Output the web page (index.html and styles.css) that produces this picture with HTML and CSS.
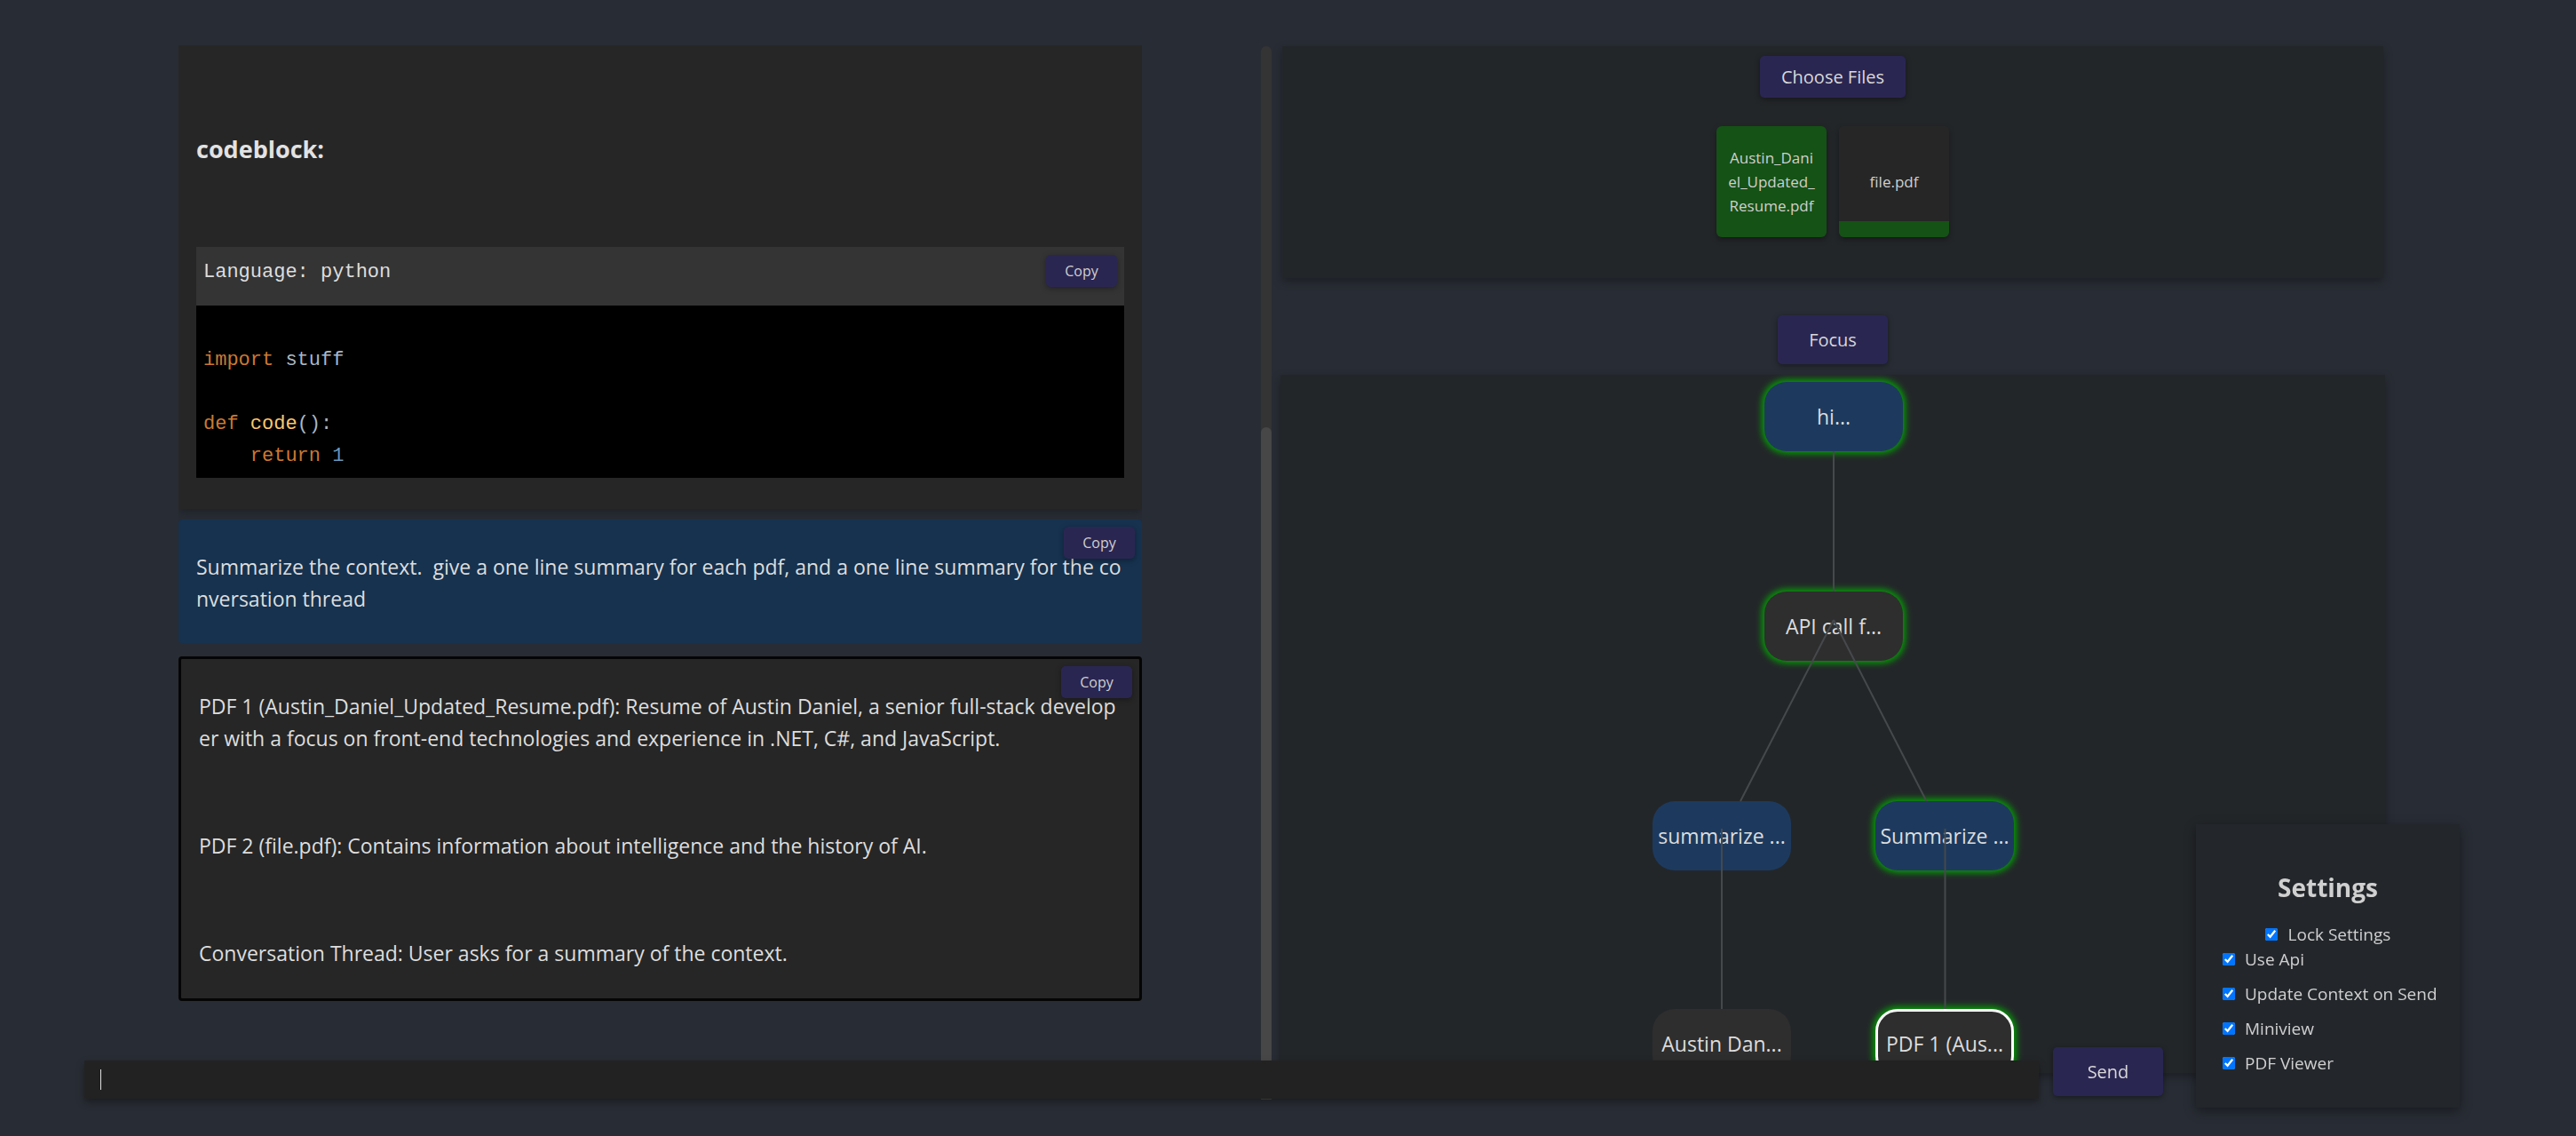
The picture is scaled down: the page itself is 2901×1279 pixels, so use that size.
FILE: index.html
```html
<!DOCTYPE html>
<html lang="en">
<head>
<meta charset="utf-8">
<title>Chat</title>
<link rel="stylesheet" href="styles.css">
</head>
<body>
<div class="app">
  <main class="chat">
    <section class="card">
      <h3 class="heading">codeblock:</h3>
      <div class="code">
        <div class="code-head">
          <span class="lang">Language: python</span>
          <button class="copy">Copy</button>
        </div>
        <div class="code-body">
          <div class="ln"><span class="kw">import</span> stuff</div>
          <div class="ln"></div>
          <div class="ln"><span class="kw">def</span> <span class="fn">code</span>():</div>
          <div class="ln">    <span class="kw">return</span> <span class="num">1</span></div>
        </div>
      </div>
    </section>
    <section class="msg user">
      <button class="copy copy-float">Copy</button>
      <p>Summarize the context.  give a one line summary for each pdf, and a one line summary for the conversation thread</p>
    </section>
    <section class="msg reply">
      <button class="copy copy-float">Copy</button>
      <p>PDF 1 (Austin_Daniel_Updated_Resume.pdf): Resume of Austin Daniel, a senior full-stack developer with a focus on front-end technologies and experience in .NET, C#, and JavaScript.</p>
      <p>PDF 2 (file.pdf): Contains information about intelligence and the history of AI.</p>
      <p>Conversation Thread: User asks for a summary of the context.</p>
    </section>
  </main>

  <div class="scrollbar"><div class="thumb"></div></div>

  <aside class="right">
    <div class="files-card">
      <button class="btn choose">Choose Files</button>
      <div class="files">
        <div class="file done">Austin_Daniel_Updated_Resume.pdf</div>
        <div class="file partial">file.pdf</div>
      </div>
    </div>
    <button class="btn focus">Focus</button>
    <div class="graph">
      <div class="node blue glow n-hi">hi...</div>
      <div class="node dark glow n-api">API call f...</div>
      <div class="node blue n-sl">summarize ...</div>
      <div class="node blue glow n-sr">Summarize ...</div>
      <div class="node dark n-al">Austin Dan...</div>
      <div class="node dark glow selected n-pr">PDF 1 (Aus...</div>
      <svg class="edges" width="1244" height="786" viewBox="0 0 1244 786">
        <line x1="623" y1="86" x2="623" y2="244"/>
        <line x1="623" y1="276" x2="518" y2="480"/>
        <line x1="623" y1="276" x2="727.5" y2="480"/>
        <line x1="497" y1="511" x2="497" y2="714"/>
        <line x1="748.5" y1="511" x2="748.5" y2="714"/>
      </svg>
    </div>
  </aside>
</div>

<div class="composer">
  <div class="input"><span class="caret"></span></div>
  <button class="btn send">Send</button>
</div>

<div class="settings">
  <h2 class="settings-title">Settings</h2>
  <label class="opt lock"><input type="checkbox" checked><span>Lock Settings</span></label>
  <label class="opt"><input type="checkbox" checked><span>Use Api</span></label>
  <label class="opt"><input type="checkbox" checked><span>Update Context on Send</span></label>
  <label class="opt"><input type="checkbox" checked><span>Miniview</span></label>
  <label class="opt"><input type="checkbox" checked><span>PDF Viewer</span></label>
</div>
</body>
</html>
```

FILE: styles.css
```css
* { box-sizing: border-box; }

html, body {
  margin: 0;
  height: 100%;
}

body {
  background: #282c34;
  color: #dddddd;
  font-family: "Open Sans", "Noto Sans", sans-serif;
  overflow: hidden;
}

.app {
  display: flex;
  align-items: flex-start;
  height: 100vh;
  padding-top: 51px;
}

/* ---------- chat column ---------- */
.chat {
  flex: none;
  width: 1085px;
  height: 1142px;
  margin-left: 201px;
  overflow: hidden;
  display: flex;
  flex-direction: column;
}

.card {
  flex: none;
  background: #262626;
  padding: 0 20px 35px;
  box-shadow: 0 4px 10px rgba(0, 0, 0, 0.25);
}

.heading {
  margin: 99px 0 92px;
  font-size: 27px;
  line-height: 36px;
  font-weight: 700;
  color: #e2e2e2;
}

.code-head {
  height: 66px;
  background: #343434;
  display: flex;
  justify-content: space-between;
  align-items: flex-start;
  padding: 9px 8px 0;
}

.lang {
  margin-top: 2px;
  font-family: "Liberation Mono", "DejaVu Sans Mono", monospace;
  font-size: 22px;
  line-height: 36px;
  color: #dddddd;
}

.code-body {
  background: #000000;
  padding: 44px 8px 6px;
  font-family: "Liberation Mono", "DejaVu Sans Mono", monospace;
  font-size: 22px;
  line-height: 36px;
  color: #a9b7c6;
}

.ln {
  height: 36px;
  white-space: pre;
}

.kw { color: #cc7832; }
.fn { color: #ffc66d; }
.num { color: #6897bb; }

.copy {
  width: 80px;
  height: 36px;
  padding: 0;
  border: 0;
  border-radius: 5px;
  background: #2a2652;
  color: #cfcfcf;
  font-family: inherit;
  font-size: 16px;
  box-shadow: 0 2px 6px rgba(0, 0, 0, 0.35);
}

.msg {
  flex: none;
  position: relative;
  font-size: 23px;
  line-height: 36px;
  border-radius: 4px;
}

.msg p {
  margin: 0;
  white-space: pre-wrap;
  word-break: break-all;
}

.user {
  margin-top: 12px;
  background: #16324f;
  padding: 35px 20px 32px;
}

.reply {
  margin-top: 15px;
  background: #262626;
  border: 3px solid #050505;
  padding: 35px 20px 33px;
}

.reply p + p { margin-top: 85px; }

.copy-float {
  position: absolute;
  top: 8px;
  right: 8px;
}

/* ---------- scrollbar ---------- */
.scrollbar {
  flex: none;
  width: 12px;
  height: 1186px;
  margin: 1px 0 0 134px;
  background: #343434;
  border-radius: 6px 6px 0 0;
  display: flex;
  flex-direction: column;
}

.thumb {
  margin-top: 429px;
  flex: 1;
  background: #474747;
  border-radius: 6px 6px 0 0;
}

/* ---------- right column ---------- */
.right {
  flex: none;
  width: 1244px;
  margin-left: 10px;
  display: flex;
  flex-direction: column;
  align-items: center;
}

.btn {
  border: 0;
  border-radius: 5px;
  background: #2a2652;
  color: #d8d8d8;
  font-family: inherit;
  font-size: 20px;
  padding: 0;
  box-shadow: 0 2px 6px rgba(0, 0, 0, 0.4);
}

.files-card {
  align-self: stretch;
  margin: 1px 2px 0;
  height: 261px;
  padding-top: 11px;
  background: #232629;
  box-shadow: 0 4px 10px rgba(0, 0, 0, 0.3);
  display: flex;
  flex-direction: column;
  align-items: center;
}

.choose {
  width: 164px;
  height: 47px;
}

.files {
  margin-top: 32px;
  display: flex;
  gap: 14px;
}

.file {
  width: 124px;
  height: 125px;
  padding: 0 11px;
  border-radius: 6px;
  display: flex;
  align-items: center;
  justify-content: center;
  text-align: center;
  font-size: 17px;
  line-height: 27px;
  word-break: break-all;
  color: #cfcfcf;
  box-shadow: 0 3px 6px rgba(0, 0, 0, 0.35);
}

.done { background: #155215; }
.partial { background: linear-gradient(to top, #155215 18px, #262626 18px); }

.focus {
  margin-top: 42px;
  width: 124px;
  height: 55px;
}

.graph {
  align-self: stretch;
  height: 786px;
  margin-top: 12px;
  background: #232629;
  position: relative;
  overflow: hidden;
  box-shadow: 0 4px 10px rgba(0, 0, 0, 0.3);
}

.node {
  position: absolute;
  width: 156px;
  height: 78px;
  border-radius: 25px;
  display: flex;
  align-items: center;
  justify-content: center;
  font-size: 23px;
  color: #dcdcdc;
  white-space: nowrap;
  z-index: 1;
}

.blue { background: #1d3a5e; }
.dark { background: #2e2e2e; }
.glow { box-shadow: 0 0 7px 3px rgba(0, 175, 0, 0.85); }
.selected { border: 3px solid #ffffff; }

.n-hi { left: 545px; top: 8px; }
.n-api { left: 545px; top: 244px; }
.n-sl { left: 419px; top: 480px; }
.n-sr { left: 670px; top: 480px; }
.n-al { left: 419px; top: 714px; }
.n-pr { left: 670px; top: 714px; }

.edges {
  position: absolute;
  left: 0;
  top: 0;
  z-index: 2;
  pointer-events: none;
}

.edges line {
  stroke: #46494c;
  stroke-width: 2;
}

/* ---------- composer (overlay) ---------- */
.composer {
  position: fixed;
  left: 95px;
  top: 1179px;
  display: flex;
  align-items: flex-end;
  gap: 16px;
  z-index: 5;
}

.input {
  width: 2201px;
  height: 43px;
  padding: 10px 18px;
  background: #222222;
  box-shadow: 0 4px 8px rgba(0, 0, 0, 0.35);
}

.caret {
  display: block;
  width: 1px;
  height: 23px;
  background: #e0e0e0;
}

.send {
  width: 124px;
  height: 55px;
  margin-bottom: 3px;
}

/* ---------- settings (overlay) ---------- */
.settings {
  position: fixed;
  left: 2473px;
  top: 928px;
  width: 297px;
  height: 319px;
  padding-top: 52px;
  background: #23272b;
  box-shadow: 0 4px 12px rgba(0, 0, 0, 0.4);
  z-index: 6;
}

.settings-title {
  margin: 0;
  font-size: 28px;
  line-height: 38px;
  font-weight: 700;
  text-align: center;
  color: #d0d0d0;
}

.opt {
  display: flex;
  align-items: center;
  gap: 11px;
  height: 27px;
  margin-top: 12px;
  padding-left: 30px;
  font-size: 19px;
  color: #cfcfcf;
}

.opt input {
  width: 14px;
  height: 14px;
  margin: 0;
  accent-color: #0075ff;
}

.lock {
  justify-content: center;
  padding-left: 0;
  margin-top: 20px;
  gap: 12px;
}

.lock + .opt { margin-top: 1px; }
```
